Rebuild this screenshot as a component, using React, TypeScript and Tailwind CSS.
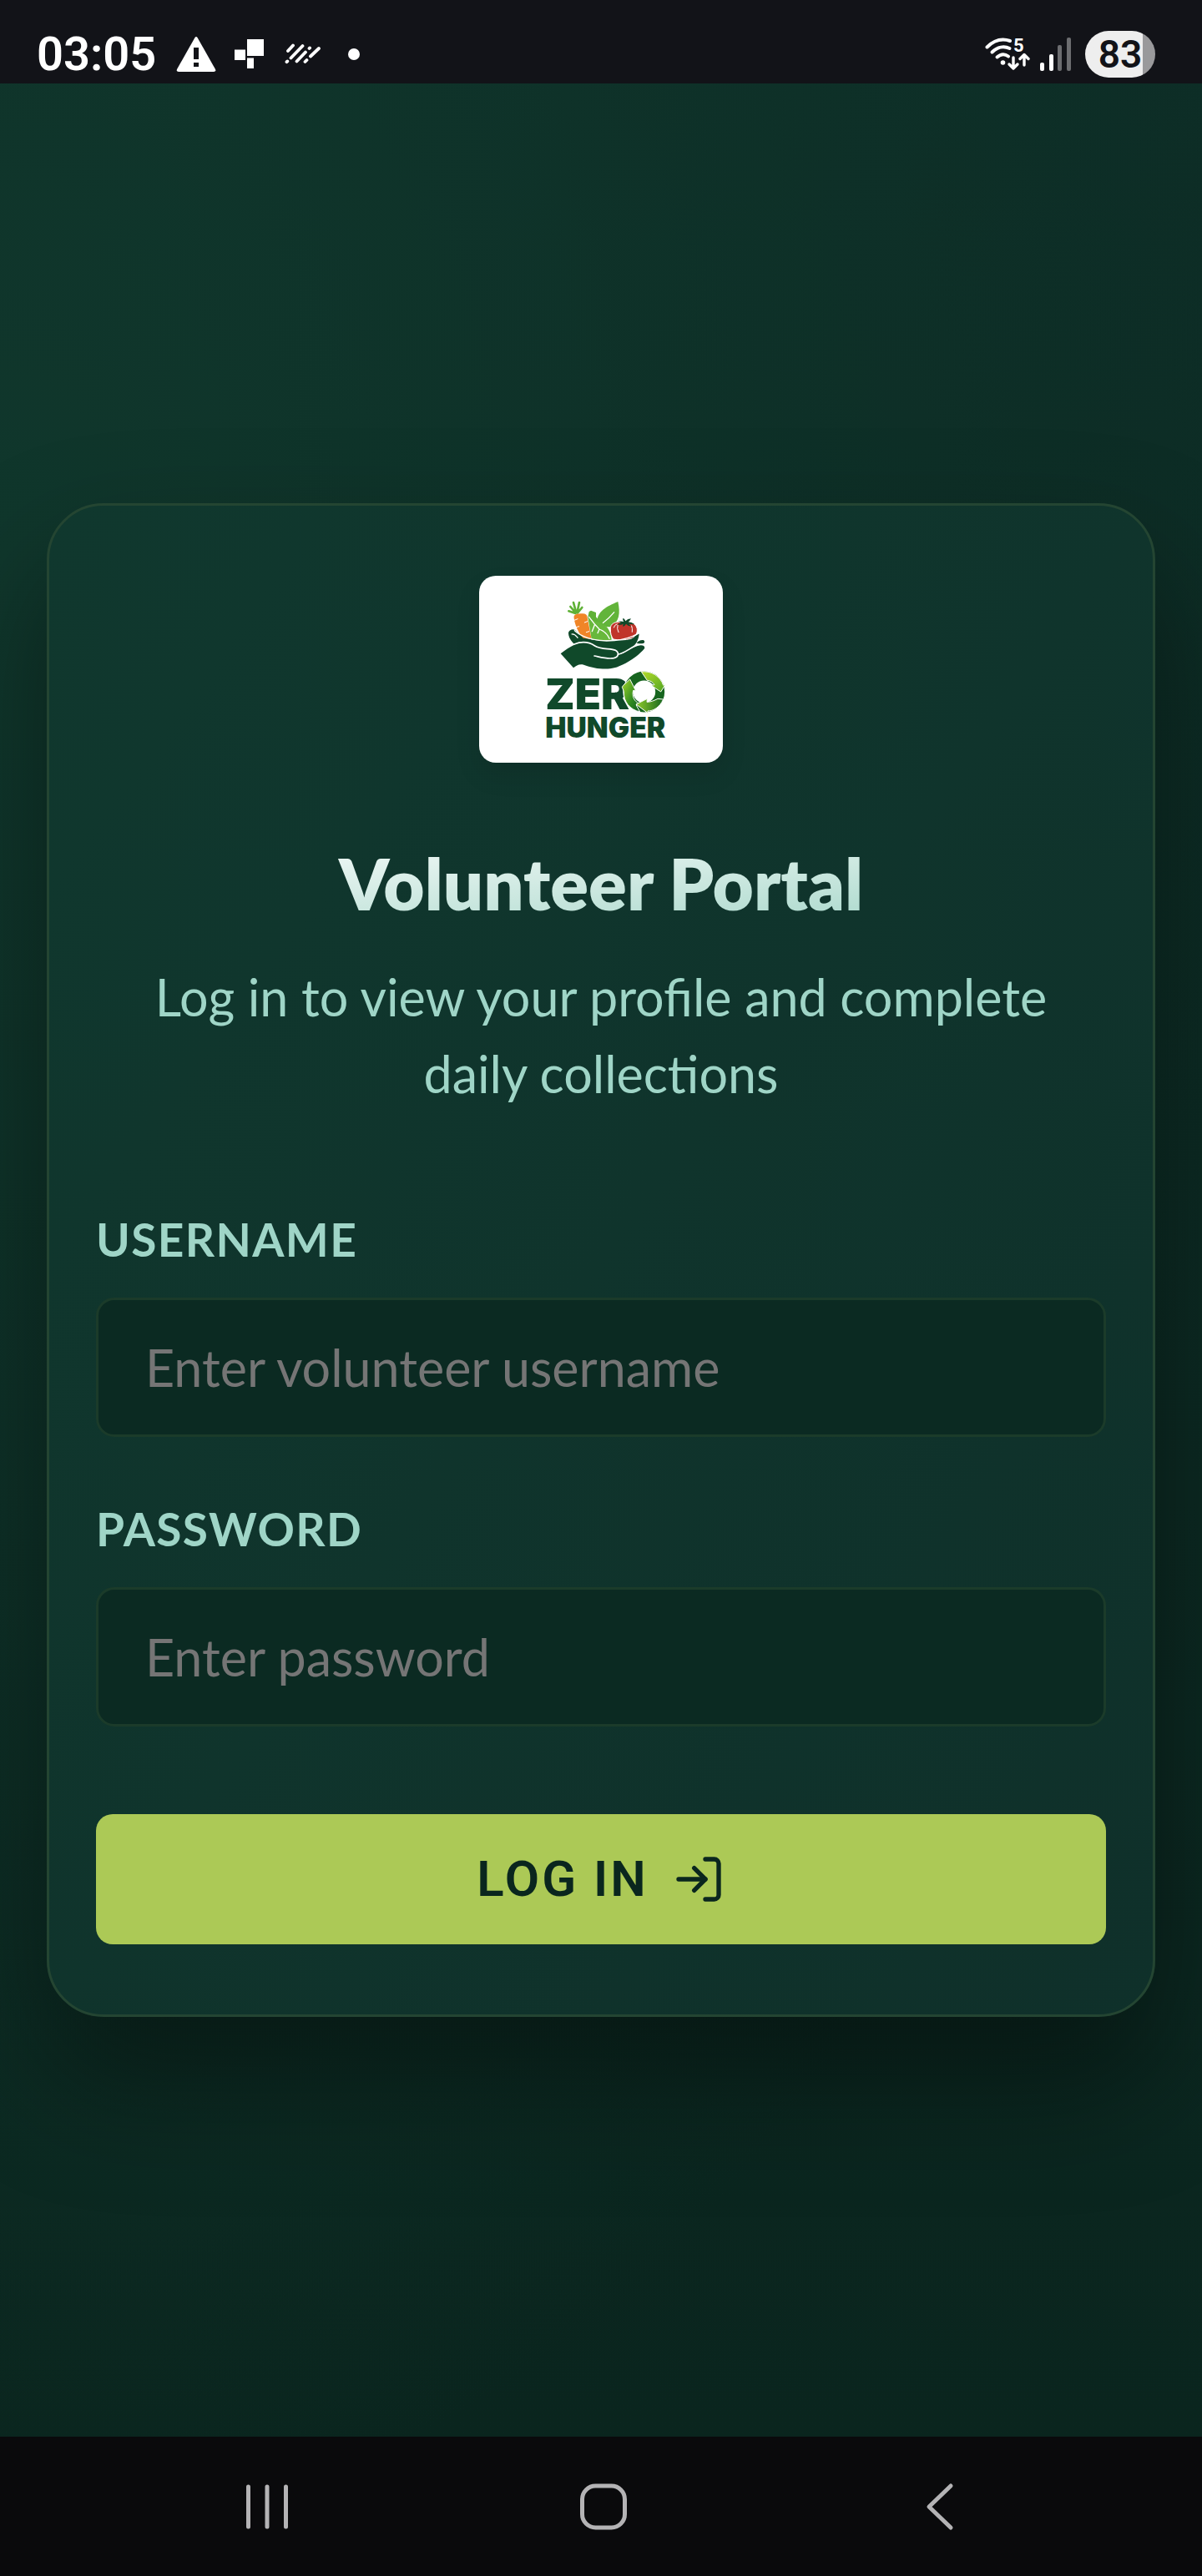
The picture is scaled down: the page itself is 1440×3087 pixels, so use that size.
import { useState } from "react";
import type { FormEvent, ReactNode } from "react";
import { LogIn } from "lucide-react";

const fields = [
  {
    id: "username",
    label: "Username",
    type: "text",
    placeholder: "Enter volunteer username",
  },
  {
    id: "password",
    label: "Password",
    type: "password",
    placeholder: "Enter password",
  },
];

function StatusBar() {
  return (
    <header className="flex h-[100px] items-center justify-between bg-[#121318] pt-[29px] pr-14 pl-11 font-['Roboto',sans-serif] text-white">
      <div className="flex items-center">
        <span className="mr-6 text-[56px] leading-none font-semibold">03:05</span>
        {/* Warning */}
        <svg width="48" height="42" viewBox="0 0 48 42" className="mr-[22px]">
          <path
            d="M22.5 1 Q24 -1 25.5 1 L47 39 Q48 42 45 42 H3 Q0 42 1 39 Z"
            fill="#fff"
          />
          <path d="M21 13h6v14h-6zM21 31h6v5h-6z" fill="#121318" />
        </svg>
        {/* Blocks */}
        <svg width="36" height="36" viewBox="0 0 36 36" className="mr-6" fill="#fff">
          <path d="M15 0h20v20H15zM0 12.5h13v12.5H0zM15 22.5h8v12.5h-8z" />
        </svg>
        {/* Slashes */}
        <svg
          width="44"
          height="26"
          viewBox="0 0 44 26"
          className="mr-8"
          stroke="#fff"
          strokeWidth="3.8"
          strokeLinecap="round"
        >
          <path d="M4 9l6-6.5M2.5 22.2l.8-.8M7.5 17.5L21.5 3M14.5 21.5l10.500-11M29.5 6l.6-.6M24.5 22l2-2M31 15.5L41 6" />
        </svg>
        <span className="size-3.5 rounded-full bg-white" />
      </div>

      <div className="flex items-center">
        {/* Wi-Fi */}
        <svg width="54" height="52" viewBox="0 -6 54 52" className="mr-3" fill="none">
          <g stroke="#fff" strokeWidth="4" strokeLinecap="round">
            <path d="M2.5 11.5C11 3 21 1 30 4" />
            <path d="M8.5 17.5C15 11 23 10 29.5 13" />
            <path d="M14.5 23.5C19 19.5 24 19.5 28 22.5" />
          </g>
          <circle cx="21.5" cy="30" r="2.8" fill="#fff" />
          <g
            stroke="#fff"
            strokeWidth="3.4"
            strokeLinecap="round"
            strokeLinejoin="round"
          >
            <path d="M34 24v12M29 32l5 5 5-5" />
            <path d="M47 33V21M42 25.5l5-5 5 5" />
          </g>
          <text
            x="34"
            y="17"
            fill="#fff"
            fontFamily="Roboto, sans-serif"
            fontSize="22"
            fontWeight="700"
          >
            5
          </text>
        </svg>
        {/* Signal */}
        <svg width="38" height="40" viewBox="0 0 38 40" className="mr-4">
          <rect y="30" width="5" height="10" rx="2" fill="#fff" />
          <rect x="11" y="20" width="5" height="20" rx="2" fill="#fff" />
          <rect x="21" y="9" width="5" height="31" rx="2" fill="#6c6d70" />
          <rect x="32" width="5" height="40" rx="2" fill="#6c6d70" />
        </svg>
        <div className="flex h-14 w-[84px] items-center justify-center rounded-full bg-linear-to-r from-[#eeeeee] from-82% to-[#99999b] to-82%">
          <span className="text-[46px] leading-none font-semibold text-[#121318]">
            83
          </span>
        </div>
      </div>
    </header>
  );
}

function Logo() {
  return (
    <div className="flex items-center justify-center rounded-[20px] bg-white shadow-[0_15px_30px_rgba(0,0,0,0.1)]">
      <svg
        role="img"
        aria-label="Zero Hunger"
        width="292"
        height="224"
        viewBox="42 30 876 672"
      >
        <defs>
          <linearGradient id="ringLight" x1="0" y1="0" x2="1" y2="1">
            <stop offset="0" stopColor="#b4dc2a" />
            <stop offset="1" stopColor="#4fa322" />
          </linearGradient>
          <linearGradient id="ringBottom" x1="0" y1="0" x2="1" y2="0">
            <stop offset="0" stopColor="#8fcb2a" />
            <stop offset="1" stopColor="#17651f" />
          </linearGradient>
          <linearGradient id="ringLeft" x1="0" y1="0" x2="1" y2="1">
            <stop offset="0" stopColor="#a5d62c" />
            <stop offset="0.6" stopColor="#2f8a1f" />
            <stop offset="1" stopColor="#0f5a20" />
          </linearGradient>
        </defs>

        {/* Bowl */}
        <path
          d="M363 234C368 222 380 220 388 226C400 240 420 252 450 260C510 270 570 262 617 238C616 262 602 290 560 306C520 318 420 310 384 276C370 262 362 248 363 234Z"
          fill="#10492a"
        />
        <path d="M374 240Q386 238 397 254" stroke="#fff" strokeWidth="4" fill="none" />

        {/* Carrot */}
        <path
          d="M388 165L364 157M389 163L370 141M391 163L381 126M394 163L402 126M396 163L412 144"
          stroke="#5fb136"
          strokeWidth="8"
          strokeLinecap="round"
        />
        <path
          d="M383 182C380 168 396 166 410 166C424 165 431 170 431 180L446 258L416 254C402 240 386 208 383 182Z"
          fill="#f08527"
        />
        <path
          d="M384 190l12-5M431 194l-10 4M391 215l10-3M437 230l-10 3"
          stroke="#fff"
          strokeWidth="3"
          strokeLinecap="round"
        />

        {/* Leaves */}
        <path
          d="M433 178L437 159L444 155L462 162L462 178L478 196L440 204Z"
          fill="#5fb136"
        />
        <path
          d="M466 196C466 158 500 140 541 123C550 164 546 196 516 212C506 216 490 212 478 204Z"
          fill="#62b43a"
        />
        <path d="M486 200Q510 182 528 160" stroke="#fff" strokeWidth="4" fill="none" />
        <path
          d="M433 178C448 192 470 196 488 205C506 214 515 232 518 260C494 264 466 262 446 258Z"
          fill="#68b83c"
        />
        <path
          d="M437 178Q456 204 474 222Q500 232 510 256M458 204l-10 26M474 222l-6 14"
          stroke="#fff"
          strokeWidth="4"
          strokeLinecap="round"
          fill="none"
        />

        {/* Tomato */}
        <path
          d="M514 222C512 200 534 192 562 198C590 190 612 206 610 228C609 242 600 250 588 256C566 262 542 262 524 258C516 246 514 236 514 222Z"
          fill="#c0342a"
          stroke="#fff"
          strokeWidth="3"
        />
        <path
          d="M543 233Q536 220 540 208M590 210Q594 220 592 232M526 216Q528 206 538 203"
          stroke="#fff"
          strokeWidth="3"
          strokeLinecap="round"
          fill="none"
        />
        <path
          d="M541 194Q556 192 562 195Q556 186 560 182Q566 186 568 193Q576 184 588 184Q584 192 578 196Q590 196 600 204Q588 206 580 202L588 212Q576 210 570 203Q566 212 558 212L560 203Q550 208 540 206Q548 200 552 198Z"
          fill="#10492a"
        />
        <path
          d="M384 226C410 252 450 262 500 264C550 264 590 252 617 236"
          stroke="#fff"
          strokeWidth="4"
          fill="none"
        />

        {/* Hand */}
        <path
          d="M335 310C356 294 380 276 408 271C444 268 452 290 486 294C512 296 544 296 544 312C566 310 590 288 612 282C630 276 640 284 636 292C610 324 560 352 528 361C496 370 450 362 418 350C400 346 392 354 381 361Z"
          fill="#10492a"
        />
        <path
          d="M384 276C414 264 440 270 458 282C480 296 516 290 532 298C546 306 544 322 526 326C500 330 476 322 456 318"
          stroke="#fff"
          strokeWidth="5"
          strokeLinecap="round"
          fill="none"
        />
        <path
          d="M541 313C566 308 588 286 614 276"
          stroke="#fff"
          strokeWidth="4"
          strokeLinecap="round"
          fill="none"
        />
        <path d="M608 272Q616 260 632 261Q640 266 634 272Q622 276 608 272Z" fill="#10492a" />

        {/* Wordmark */}
        <g fontFamily="Inter, sans-serif" fontWeight="900" fill="#10492a">
          <text x="280" y="509" fontSize="153">
            ZER
          </text>
          <text x="280" y="612" fontSize="101">
            HUNGER
          </text>
        </g>

        {/* Recycling ring */}
        <circle cx="635" cy="447" r="76" fill="#fff" />
        <circle
          cx="635"
          cy="447"
          r="57"
          stroke="#17651f"
          strokeWidth="33"
          fill="none"
        />
        <path
          d="M560 424L584 402L605 444L596 442C590 464 600 482 618 490L606 494L620 519C584 512 560 482 562 446L556 430Z"
          fill="url(#ringLeft)"
          stroke="#fff"
          strokeWidth="3"
        />
        <path
          d="M625 375C660 370 694 392 704 424L712 420L695 447L660 424L672 422C666 412 656 406 646 406Z"
          fill="url(#ringLight)"
          stroke="#fff"
          strokeWidth="3"
        />
        <path
          d="M606 492L646 472L645 484C660 484 672 478 684 472L704 474C690 504 668 516 648 516L649 524Z"
          fill="url(#ringBottom)"
          stroke="#fff"
          strokeWidth="3"
        />
      </svg>
    </div>
  );
}

function NavButton({ label, children }: { label: string; children: ReactNode }) {
  return (
    <button type="button" aria-label={label} className="flex flex-1 justify-center">
      <svg
        width="60"
        height="60"
        viewBox="0 0 60 60"
        fill="none"
        stroke="#b4b3b5"
        strokeWidth="5"
        strokeLinecap="round"
      >
        {children}
      </svg>
    </button>
  );
}

export default function App() {
  const [values, setValues] = useState<Record<string, string>>({});

  const handleSubmit = (e: FormEvent) => {
    e.preventDefault();
  };

  return (
    <div className="flex min-h-screen flex-col bg-[#0a0a0c] font-['Lato',sans-serif]">
      <StatusBar />

      <main className="flex flex-1 items-center overflow-hidden bg-[#0a251e] bg-[radial-gradient(ellipse_at_0%_20%,#10372c_0%,#10372c00_75%),linear-gradient(180deg,#0d2d26_0%,#0c2922_60%,#0a251e_100%)] px-14">
        <div className="flex w-full flex-col items-center rounded-[68px] border-3 border-[#244532] bg-linear-to-br from-[#10382e] to-[#0f302a] px-14 py-[84px] shadow-[0_75px_150px_rgba(0,0,0,0.4)]">
          <Logo />

          <h1 className="mt-[90px] w-full bg-linear-to-br from-white to-[#9dd3c5] bg-clip-text text-center text-[85px] leading-[108px] font-extrabold text-transparent">
            Volunteer Portal
          </h1>
          <p className="mt-[37px] px-14 text-center text-[61px] leading-[92px] text-[#9fd5c7]">
            Log in to view your profile and complete daily collections
          </p>

          <form onSubmit={handleSubmit} className="mt-[116px] w-full">
            {fields.map((field) => (
              <div key={field.id} className="mb-[74px]">
                <label
                  htmlFor={field.id}
                  className="block text-[55px] leading-[72px] font-bold tracking-wide text-[#9fd5c7] uppercase"
                >
                  {field.label}
                </label>
                <input
                  id={field.id}
                  type={field.type}
                  placeholder={field.placeholder}
                  value={values[field.id] ?? ""}
                  onChange={(e) =>
                    setValues({ ...values, [field.id]: e.target.value })
                  }
                  className="mt-[34px] block h-[167px] w-full rounded-[22px] border-3 border-[#1b3b2a] bg-[#0b2a22] px-14 text-[61px] text-white placeholder:text-[#757575]"
                />
              </div>
            ))}

            <button
              type="submit"
              className="mt-[105px] flex h-[156px] w-full items-center justify-center gap-7 rounded-[20px] bg-[#acc956] font-['Roboto',sans-serif] text-[60px] font-semibold tracking-wider text-[#0a261e]"
            >
              LOG IN
              <LogIn size={64} />
            </button>
          </form>
        </div>
      </main>

      <nav className="flex h-[167px] items-center bg-[#0a0a0c] pr-[112px] pl-[118px]">
        <NavButton label="Recent apps">
          <path d="M7.5 6v48M30 6v48M52.5 6v48" />
        </NavButton>
        <NavButton label="Home">
          <rect x="4.5" y="5" width="51" height="50" rx="16" />
        </NavButton>
        <NavButton label="Back">
          <path d="M43 5L17 30l26 25" strokeLinejoin="round" />
        </NavButton>
      </nav>
    </div>
  );
}
